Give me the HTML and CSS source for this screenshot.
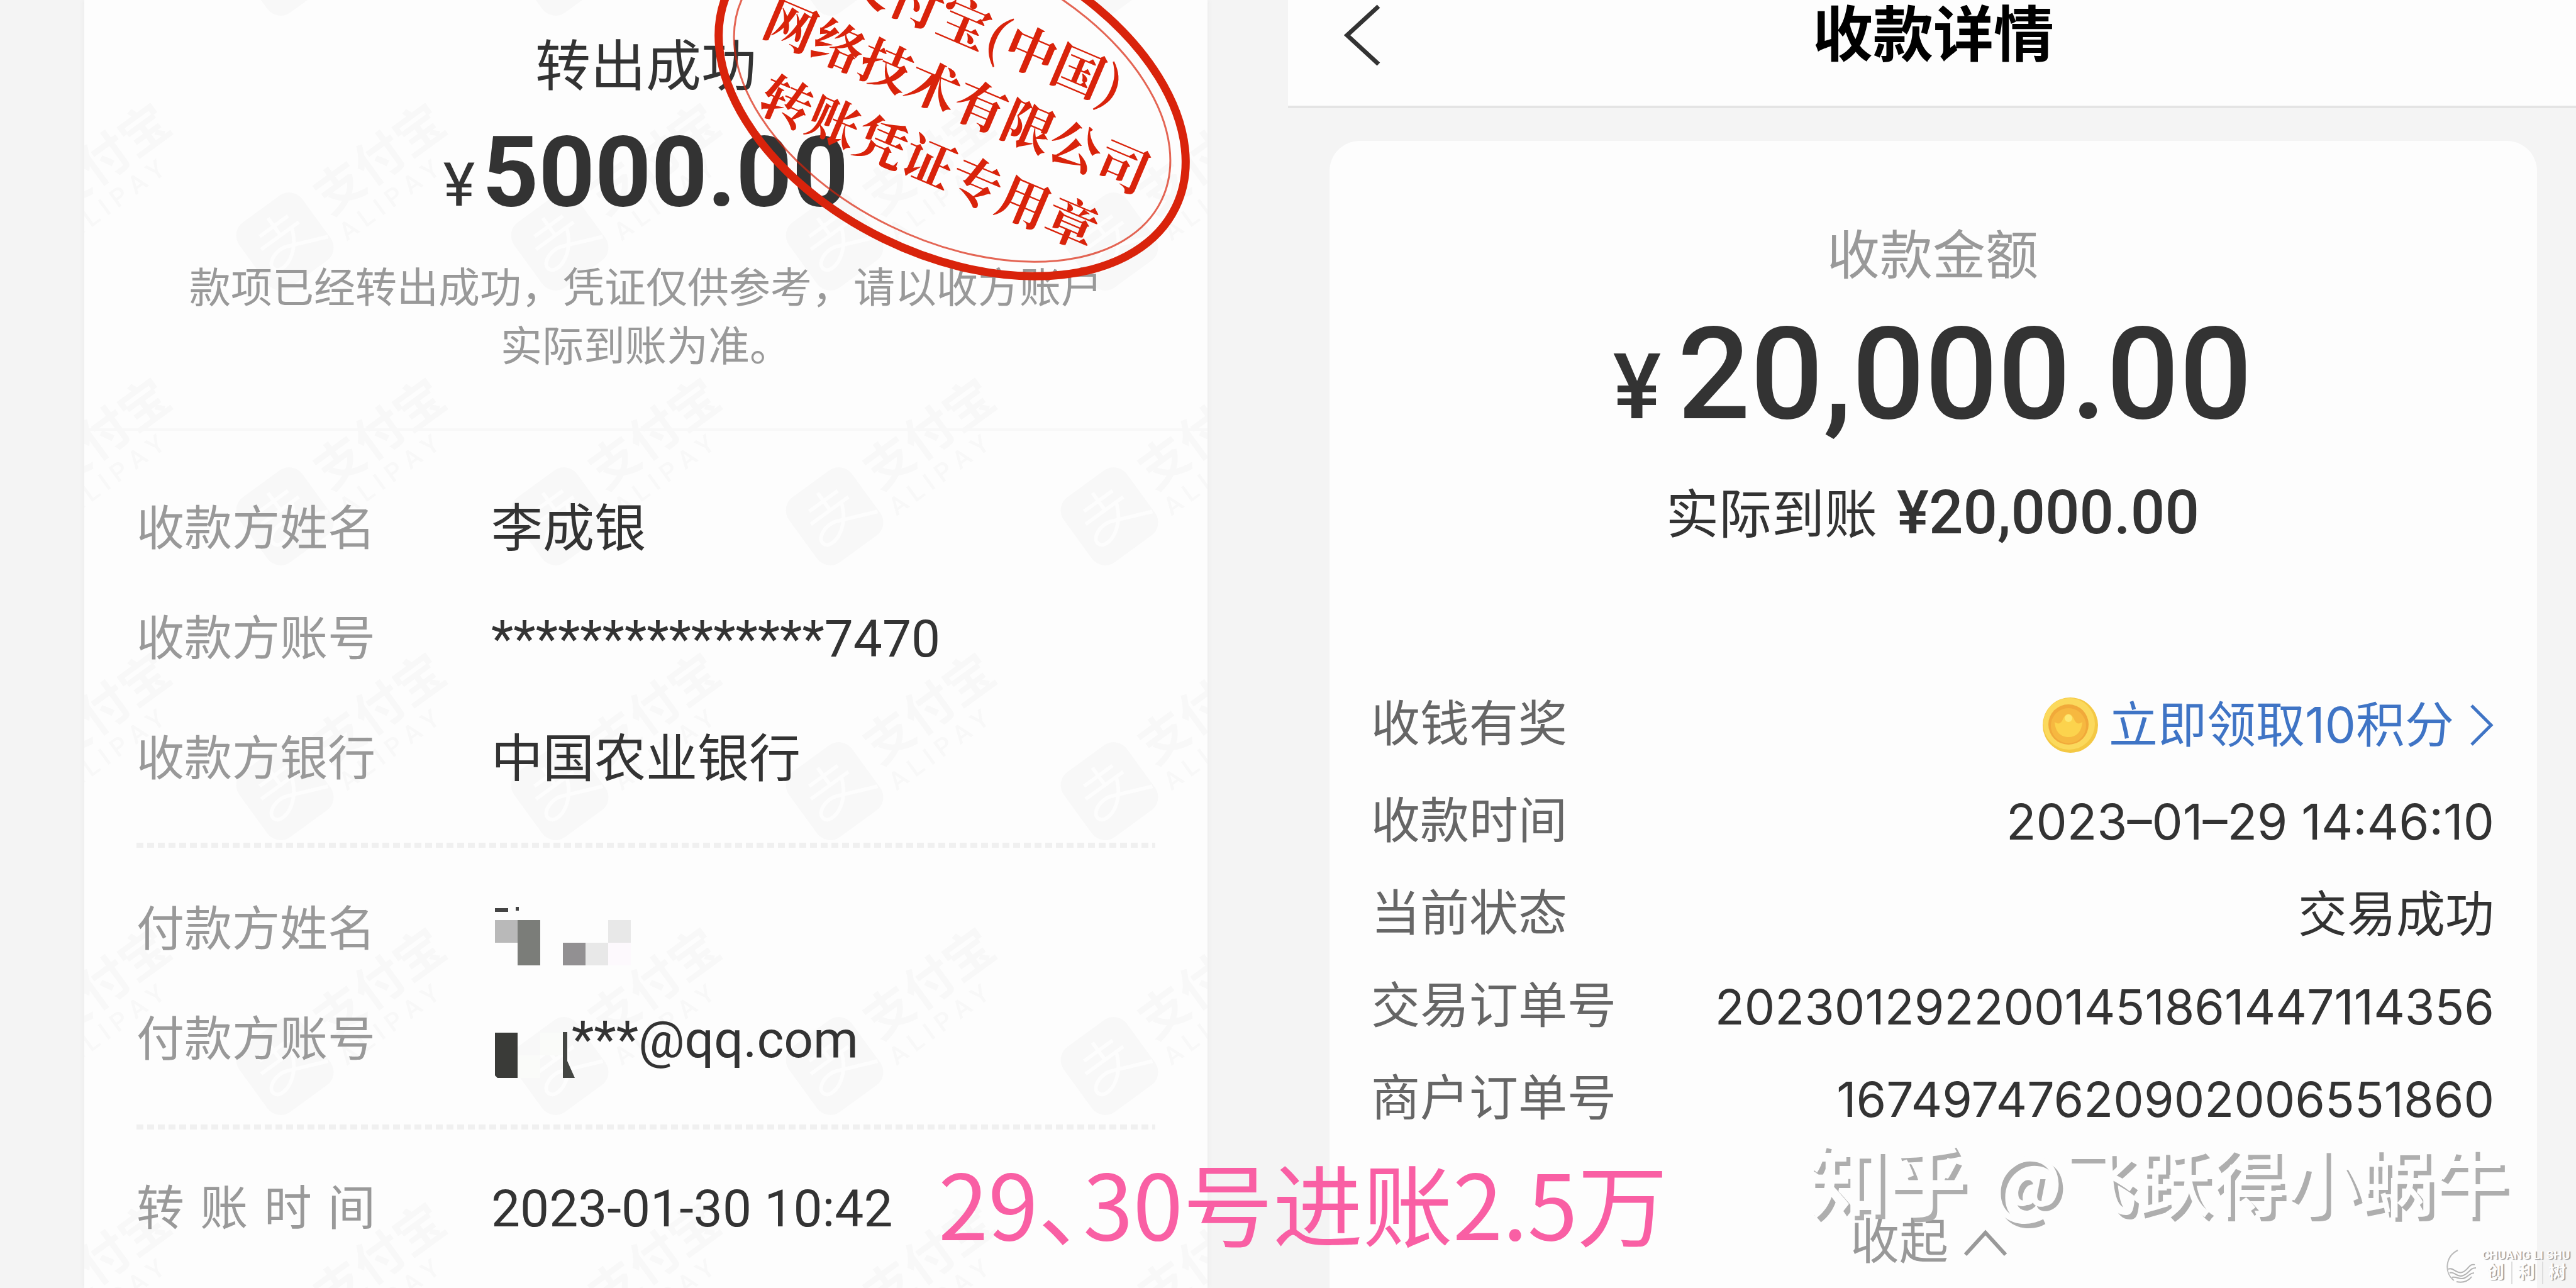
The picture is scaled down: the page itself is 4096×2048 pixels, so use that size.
FILE: index.html
```html
<!DOCTYPE html>
<html lang="zh-CN">
<head>
  <meta charset="UTF-8">
  <meta name="viewport" content="width=device-width, initial-scale=1.0">
  <title>收款详情</title>
  <link rel="stylesheet" href="styles.css">
</head>
<body>
  <main class="page">
    <section class="transfer">
      <div class="voucher">
        <svg class="voucher-pattern" aria-hidden="true">
          <defs>
            <pattern id="alipay" x="214" y="116" width="437" height="437" patternUnits="userSpaceOnUse">
              <g transform="translate(105 268) rotate(-36)">
                <rect x="-62" y="-64" width="124" height="128" rx="26" fill="#f8f8f8"/>
                <path d="M-28 -30H28M0 -46V-12M-38 -12H36M22 -12C10 22 -20 38 -36 30C-52 16 -20 -2 2 10L60 34" fill="none" stroke="#fdfdfd" stroke-width="6"/>
                <text class="pattern-name" x="82" y="10">支付宝</text>
                <text class="pattern-latin" x="80" y="58">A L I P A Y</text>
              </g>
            </pattern>
          </defs>
          <rect width="100%" height="100%" fill="url(#alipay)"/>
        </svg>

        <header class="voucher-head">
          <h2>转出成功</h2>
          <p class="voucher-amount"><span>¥</span>5000.00</p>
          <p class="voucher-note">款项已经转出成功，凭证仅供参考，请以收方账户<br>实际到账为准。</p>
        </header>

        <dl class="voucher-rows payee">
          <div class="row"><dt>收款方姓名</dt><dd>李成银</dd></div>
          <div class="row row-account"><dt>收款方账号</dt><dd>***************7470</dd></div>
          <div class="row"><dt>收款方银行</dt><dd>中国农业银行</dd></div>
        </dl>
        <dl class="voucher-rows payer">
          <div class="row">
            <dt>付款方姓名</dt>
            <dd>
              <svg class="mosaic" width="260" height="100" viewBox="0 0 260 100" role="img" aria-label="已隐藏">
                <path d="M6 16h21v6H6zM39 14h5v6h-5z" fill="#444"/>
                <path d="M6 35h36v36H6z" fill="#b9b9b9"/>
                <path d="M42 35h36v72H42z" fill="#7b7d79"/>
                <path d="M114 71h36v36h-36z" fill="#929092"/>
                <path d="M150 71h36v36h-36zM186 35h36v36h-36z" fill="#e8e8e8"/>
                <path d="M186 71h36v36h-36z" fill="#fdf9fd"/>
              </svg>
            </dd>
          </div>
          <div class="row">
            <dt>付款方账号</dt>
            <dd>
              <svg class="mosaic" width="128" height="100" viewBox="0 0 128 100" role="img" aria-label="已隐藏">
                <path d="M6 39h36v72H10l-4 -4z" fill="#3a3b38"/>
                <path d="M42 75h36v36H42zM78 39h36v36H78z" fill="#fafbf9"/>
                <path d="M114 38h7v46l12 27h-19z" fill="#444643"/>
              </svg>***@qq.com
            </dd>
          </div>
        </dl>
        <dl class="voucher-rows time">
          <div class="row"><dt class="spread">转账时间</dt><dd>2023-01-30 10:42</dd></div>
        </dl>

        <svg class="stamp" width="780" height="600" viewBox="-390 -300 780 600" role="img" aria-label="转账凭证专用章">
          <g transform="rotate(26)">
            <ellipse rx="395" ry="248" class="stamp-outer"/>
            <ellipse rx="370" ry="225" class="stamp-inner"/>
          </g>
          <g transform="rotate(23)">
            <text x="4" y="-88">支付宝(中国)</text>
            <text x="6" y="24">网络技术有限公司</text>
            <text x="6" y="138">转账凭证专用章</text>
          </g>
        </svg>
      </div>
    </section>

    <section class="receipt">
      <header class="navbar">
        <button class="back" type="button" aria-label="返回">
          <svg width="60" height="100" viewBox="0 0 60 100"><path d="M56 4L6 50L56 96" fill="none" stroke="#333" stroke-width="7"/></svg>
        </button>
        <h1>收款详情</h1>
      </header>

      <div class="receipt-card">
        <p class="receipt-label">收款金额</p>
        <p class="receipt-amount"><span>¥</span>20,000.00</p>
        <p class="receipt-actual">实际到账 <b>¥20,000.00</b></p>

        <dl class="receipt-rows">
          <div class="item item-reward">
            <dt>收钱有奖</dt>
            <dd>
              <a href="#">
                <svg class="coin" width="90" height="90" viewBox="0 0 90 90" aria-hidden="true">
                  <circle cx="45" cy="45" r="44" fill="#f4c844"/>
                  <circle cx="43" cy="43" r="41" fill="#fbd95c"/>
                  <circle cx="42" cy="44" r="32" fill="#f1a93a"/>
                  <circle cx="42" cy="46" r="28" fill="#f6b840"/>
                  <path d="M20 40c5 4 9 3 12-2c3-7 6-11 10-11s7 4 10 11c3 5 7 6 12 2c-1 15-9 24-22 24s-21-9-22-24z" fill="#fcd34d"/>
                  <circle cx="42" cy="34" r="6" fill="#fde875"/>
                </svg>
                <span>立即领取10积分</span>
                <svg class="arrow" width="40" height="68" viewBox="0 0 40 68" aria-hidden="true"><path d="M4 3L35 34L4 65" fill="none" stroke="#3f74c5" stroke-width="5"/></svg>
              </a>
            </dd>
          </div>
          <div class="item"><dt>收款时间</dt><dd>2023–01–29 14:46:10</dd></div>
          <div class="item"><dt>当前状态</dt><dd>交易成功</dd></div>
          <div class="item"><dt>交易订单号</dt><dd class="order-no">2023012922001451861447114356</dd></div>
          <div class="item"><dt>商户订单号</dt><dd class="order-no">16749747620902006551860</dd></div>
        </dl>

        <button class="collapse" type="button">
          收起
          <svg width="70" height="44" viewBox="0 0 70 44" aria-hidden="true"><path d="M3 41L35 6L67 41" fill="none" stroke="#999" stroke-width="6"/></svg>
        </button>
      </div>
    </section>

    <p class="caption">29、30号进账2.5万</p>
    <p class="author"><b>知乎</b> @飞跃得小蜗牛</p>
    <div class="brand">
      <svg width="52" height="56" viewBox="0 0 52 56" aria-hidden="true">
        <path d="M18 2C-2 12 -4 38 12 50" fill="none" stroke="#bbb" stroke-width="2"/>
        <path d="M3 32c8-4 12 8 22 5s10-14 20-12M5 38c8-3 12 8 22 4s10-12 20-12M9 45c8-2 12 5 20 1s8-8 15-8M16 52c10 2 18 0 24-8" fill="none" stroke="#b4b4b4" stroke-width="2"/>
      </svg>
      <div class="brand-text">
        <span class="brand-latin">CHUANG LI SHU</span>
        <span class="brand-name"><i>创</i><i>利</i><i>树</i></span>
      </div>
    </div>
  </main>
</body>
</html>
```
FILE: styles.css
```css
* {
  box-sizing: border-box;
  margin: 0;
  padding: 0;
}

body {
  font-family: Roboto, "Noto Sans CJK SC", sans-serif;
  background-color: #f4f4f4;
  color: #333;
}

button {
  border: none;
  background: none;
  font-family: inherit;
  cursor: pointer;
}

.page {
  position: relative;
  display: grid;
  grid-template-columns: 1fr 1fr;
  height: 100vh;
  overflow: hidden;
}

/* transfer voucher */
.transfer {
  padding: 0 128px 0 134px;
}

.voucher {
  position: relative;
  height: 100%;
  padding-top: 56px;
  background-color: #fdfdfd;
  box-shadow: 0 0 8px #e8e8e8;
}

.voucher-pattern {
  position: absolute;
  top: 0;
  left: 0;
  width: 100%;
  height: 100%;
}

.pattern-name {
  font-size: 78px;
  font-weight: 700;
  fill: #f8f8f8;
}

.pattern-latin {
  font-size: 40px;
  font-weight: 500;
  fill: #f8f8f8;
}

.voucher-head,
.voucher-rows {
  position: relative;
}

.voucher-head {
  padding-bottom: 83px;
  border-bottom: 4px solid #f8f8f8;
  text-align: center;
}

.voucher-head h2 {
  font-size: 88px;
  font-weight: 400;
  line-height: 100px;
}

.voucher-amount {
  margin-top: 38px;
  font-size: 156px;
  font-weight: 700;
  line-height: 160px;
}

.voucher-amount span {
  margin-right: 12px;
  font-size: 96px;
  font-weight: 400;
  line-height: 1;
}

.voucher-note {
  margin-top: 58px;
  font-size: 66px;
  line-height: 93px;
  color: #999;
}

.voucher-rows {
  display: grid;
  gap: 75px;
  margin: 0 83px;
}

.payee {
  padding: 106px 0 83px;
}

.payer,
.time {
  background: repeating-linear-gradient(to right, #f0f0f0 0 11px, transparent 11px 17px) top / 100% 8px no-repeat;
}

.payer {
  padding: 88px 0 85px;
}

.time {
  padding-top: 84px;
}

.row {
  display: grid;
  grid-template-columns: 380px 1fr;
  column-gap: 184px;
  height: 100px;
  line-height: 100px;
}

.row-account {
  margin-bottom: 16px;
}

.row dt {
  font-size: 76px;
  color: #999;
}

.row dd {
  display: flex;
  font-size: 82px;
}

.row .spread {
  text-align: justify;
  text-align-last: justify;
  text-justify: inter-character;
}

.mosaic {
  overflow: visible;
}

.stamp {
  position: absolute;
  top: -143px;
  left: 990px;
  overflow: visible;
}

.stamp ellipse {
  fill: none;
  stroke: #d9230b;
}

.stamp-outer {
  stroke-width: 13;
}

.stamp-inner {
  stroke-width: 3;
  stroke-opacity: 0.7;
}

.stamp text {
  font-family: "Noto Serif CJK SC", "Noto Sans CJK SC", serif;
  font-size: 82px;
  font-weight: 700;
  text-anchor: middle;
  fill: #d9230b;
}

/* receipt details */
.navbar {
  display: grid;
  grid-template-columns: 1fr auto 1fr;
  align-items: center;
  height: 172px;
  padding: 0 84px 56px 88px;
  border-bottom: 4px solid #e4e4e4;
  background-color: #fdfdfd;
}

.back {
  justify-self: start;
  height: 100px;
}

.navbar h1 {
  font-size: 96px;
  font-weight: 700;
  line-height: 104px;
  color: #000;
}

.receipt-card {
  height: 100%;
  margin: 52px 62px 0 66px;
  padding: 132px 68px 0 66px;
  border-radius: 48px;
  background-color: #fdfdfd;
  text-align: center;
}

.receipt-label {
  font-size: 84px;
  line-height: 104px;
  color: #999;
}

.receipt-amount {
  margin-top: 32px;
  font-size: 204px;
  font-weight: 500;
  line-height: 208px;
}

.receipt-amount span {
  margin-right: 26px;
  font-size: 144px;
  line-height: 1;
}

.receipt-actual {
  margin-top: 66px;
  font-size: 84px;
  line-height: 108px;
}

.receipt-actual b {
  margin-left: 10px;
  font-size: 96px;
  font-weight: 500;
  line-height: 1;
}

.receipt-rows {
  display: grid;
  gap: 47px;
  margin-top: 229px;
}

.item {
  display: flex;
  justify-content: space-between;
  align-items: center;
  height: 100px;
  font-size: 78px;
  line-height: 100px;
}

.item-reward {
  margin-bottom: 7px;
}

.item dt {
  color: #666;
}

.item dd {
  font-family: Inter, "Noto Sans CJK SC", sans-serif;
}

.item .order-no {
  font-size: 77px;
}

.item a {
  display: flex;
  align-items: center;
  gap: 16px;
  color: #3f74c5;
  text-decoration: none;
}

.arrow {
  margin-left: 8px;
}

.collapse {
  display: flex;
  align-items: center;
  gap: 24px;
  margin: 128px auto 0 762px;
  font-size: 78px;
  line-height: 100px;
  color: #999;
}

/* overlays */
.caption {
  position: absolute;
  bottom: 38px;
  left: 1492px;
  font-family: "Noto Sans CJK SC", sans-serif;
  font-size: 143px;
  font-feature-settings: "halt";
  line-height: 200px;
  color: #f95fa4;
}

.author {
  position: absolute;
  right: 108px;
  bottom: 94px;
  font-family: "Noto Sans CJK SC", sans-serif;
  font-size: 118px;
  font-weight: 500;
  line-height: 160px;
  color: #fdfdfd;
  text-shadow: 7px 7px 0 #aeaeae;
}

.author b {
  margin-right: 12px;
  font-size: 126px;
  line-height: 1;
}

.brand {
  position: absolute;
  right: 8px;
  bottom: 6px;
  display: flex;
  gap: 4px;
  color: #fdfdfd;
  text-shadow: 2px 1px 1px #999;
}

.brand-text {
  display: grid;
  width: 142px;
}

.brand-latin {
  font-size: 19px;
  font-weight: 700;
  line-height: 20px;
  white-space: nowrap;
}

.brand-name {
  display: flex;
  justify-content: space-between;
  font-size: 28px;
  font-weight: 700;
  line-height: 36px;
}

.brand-name i {
  padding: 0 8px;
  border-left: 2px solid #ddd;
  font-style: normal;
}

.brand-name i:first-child {
  border-left: none;
}
```
